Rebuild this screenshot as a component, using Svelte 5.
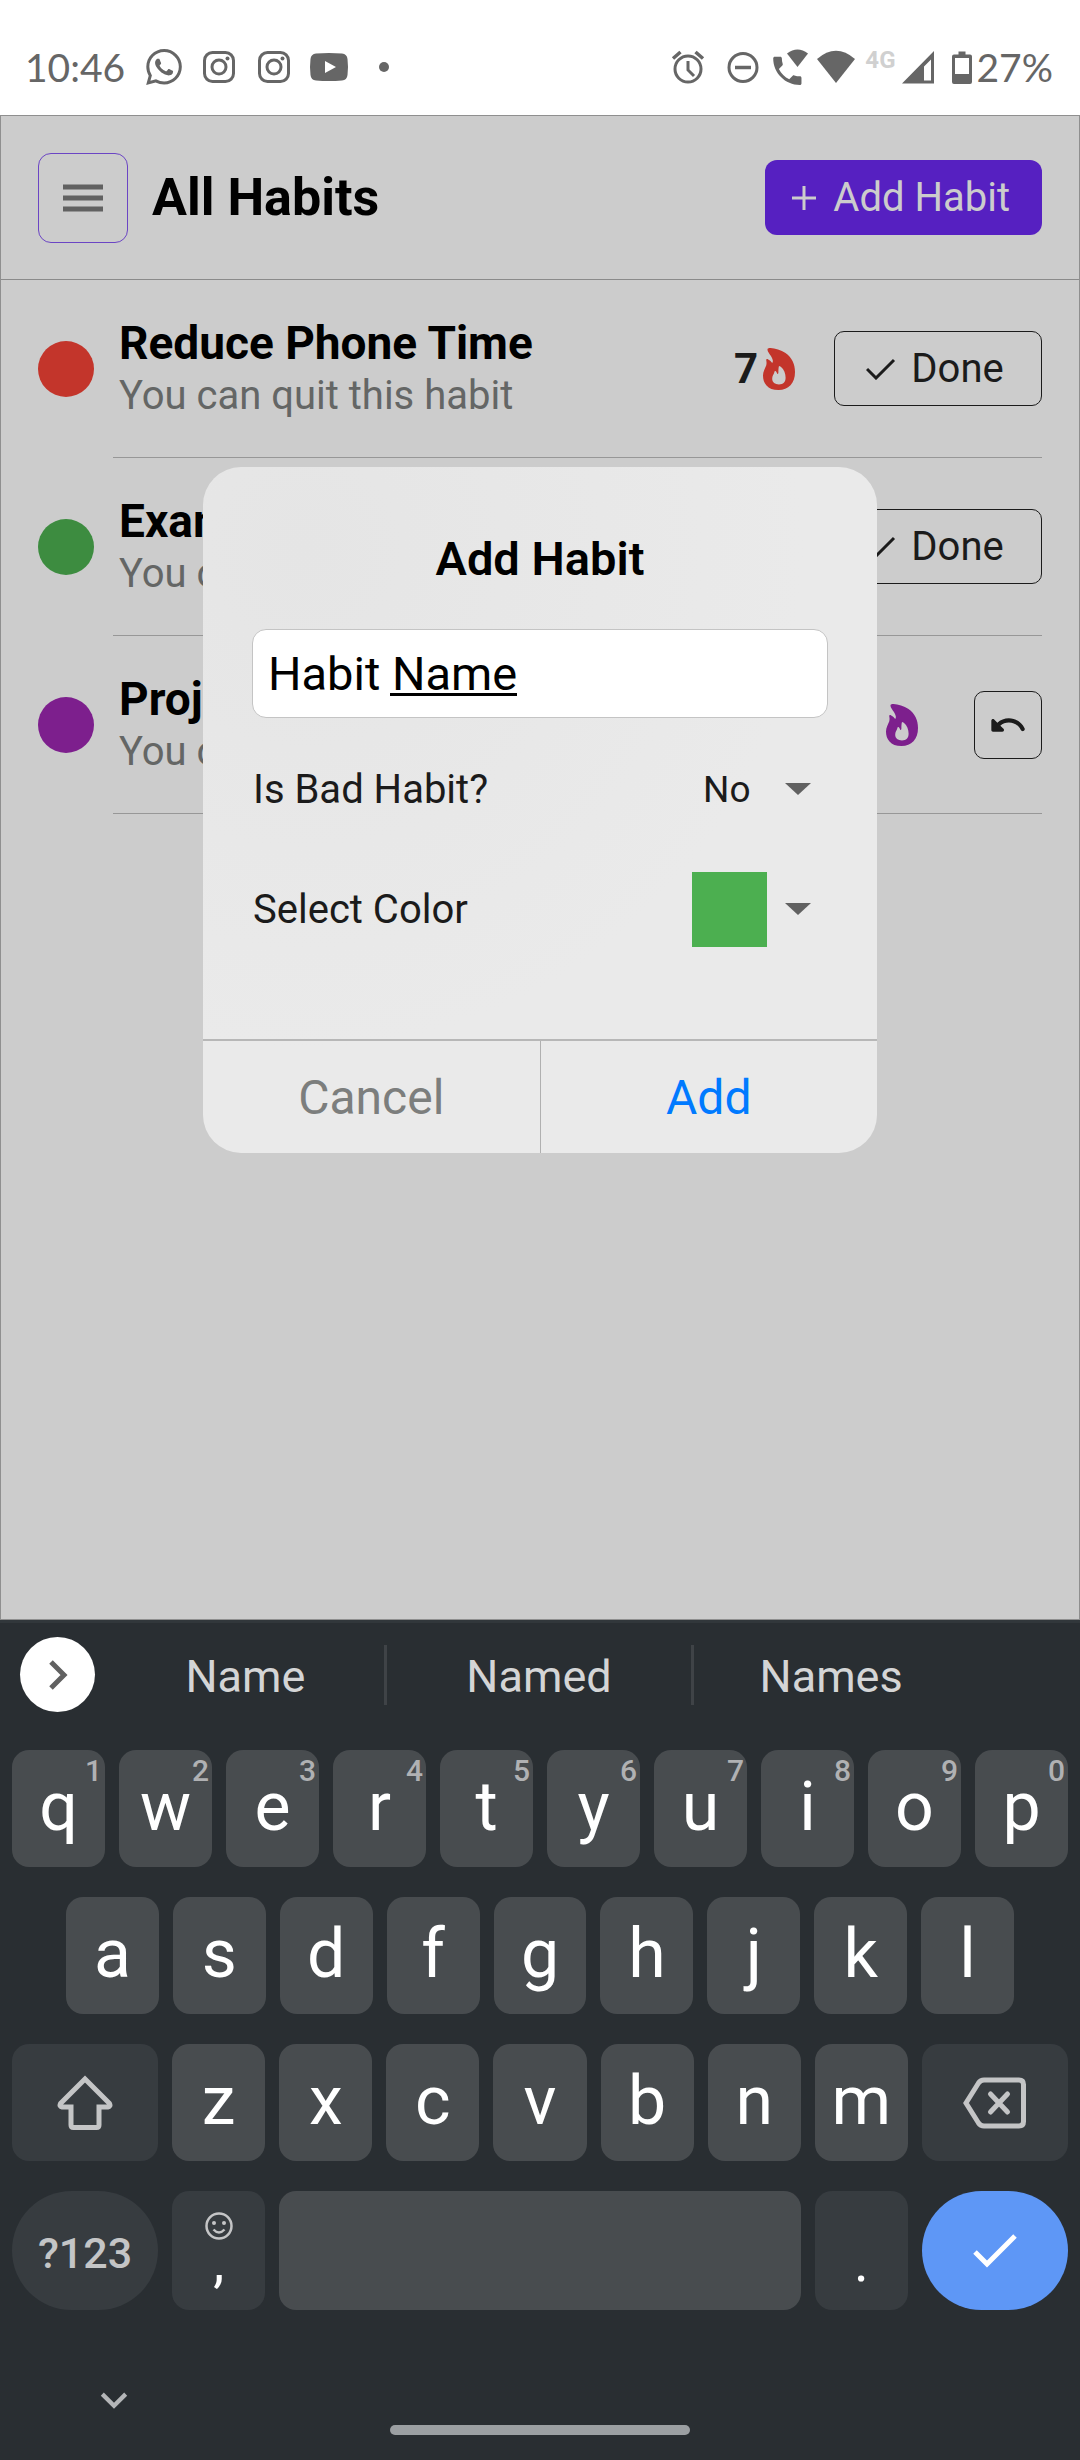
<script>
  const habits = [
    { title: 'Reduce Phone Time', note: 'You can quit this habit', color: 'red', streak: 7, done: false },
    { title: 'Exam', note: 'You can', color: 'green', streak: null, done: false },
    { title: 'Proj', note: 'You can', color: 'purple', streak: 1, done: true }
  ];

  const suggestions = ['Name', 'Named', 'Names'];
  const topRow = 'qwertyuiop'.split('').map((letter, i) => ({ letter, hint: (i + 1) % 10 }));
  const middleRow = 'asdfghjkl'.split('');
  const bottomRow = 'zxcvbnm'.split('');

  let name = $state('Habit Name');
  let bad = $state('No');
  let color = $state('green');
</script>

{#snippet instagram()}
  <svg class="glyph" viewBox="0 0 40 40" aria-hidden="true">
    <rect x="5.5" y="5.5" width="29" height="29" rx="8" fill="none" stroke="#666" stroke-width="3" />
    <circle cx="20" cy="20" r="7" fill="none" stroke="#666" stroke-width="3" />
    <circle cx="28.500" cy="11.500" r="2" fill="#666" />
  </svg>
{/snippet}

{#snippet arrow()}
  <svg class="arrow" viewBox="0 0 26 12" aria-hidden="true"><path d="M0 0h26L13 12z" fill="#616161" /></svg>
{/snippet}

<div class="device">
  <div class="screen">
    <div class="status">
      <div class="status-left">
        <span class="clock">10:46</span>
        <svg class="glyph" viewBox="-1.400 -1.400 26.800 26.800" aria-hidden="true">
          <path fill="#666" d="M17.472 14.382c-.297-.149-1.758-.867-2.03-.967-.273-.099-.471-.148-.67.15-.197.297-.767.966-.94 1.164-.173.199-.347.223-.644.075-.297-.15-1.255-.463-2.39-1.475-.883-.788-1.48-1.761-1.653-2.059-.173-.297-.018-.458.13-.606.134-.133.298-.347.446-.52.149-.174.198-.298.298-.497.099-.198.05-.371-.025-.52-.075-.149-.669-1.612-.916-2.207-.242-.579-.487-.5-.669-.51-.173-.008-.371-.01-.57-.01-.198 0-.52.074-.792.372-.272.297-1.04 1.016-1.04 2.479 0 1.462 1.065 2.875 1.213 3.074.149.198 2.096 3.2 5.077 4.487.709.306 1.262.489 1.694.625.712.227 1.36.195 1.871.118.571-.085 1.758-.719 2.006-1.413.248-.694.248-1.289.173-1.413-.074-.124-.272-.198-.57-.347m-5.421 7.403h-.004a9.87 9.87 0 01-5.031-1.378l-.361-.214-3.741.982.998-3.648-.235-.374a9.86 9.86 0 01-1.51-5.26c.001-5.45 4.436-9.884 9.888-9.884 2.64 0 5.122 1.03 6.988 2.898a9.825 9.825 0 012.893 6.994c-.003 5.45-4.437 9.884-9.885 9.884m8.413-18.297A11.815 11.815 0 0012.05 0C5.495 0 .16 5.335.157 11.892c0 2.096.547 4.142 1.588 5.945L.057 24l6.305-1.654a11.882 11.882 0 005.683 1.448h.005c6.554 0 11.89-5.335 11.893-11.893a11.821 11.821 0 00-3.48-8.413Z" />
        </svg>
        {@render instagram()}
        {@render instagram()}
        <svg class="glyph" viewBox="0 0 40 40" aria-hidden="true">
          <path fill="#666" fill-rule="evenodd" d="M7 6.500Q20 5.500 33 6.500Q38 7 38.500 12Q39.500 20 38.500 28Q38 33 33 33.500Q20 34.500 7 33.500Q2 33 1.500 28Q.500 20 1.500 12Q2 7 7 6.500zM16 14v12l11-6z" />
        </svg>
        <svg class="glyph" viewBox="0 0 40 40" aria-hidden="true"><circle cx="20" cy="20" r="5" fill="#666" /></svg>
      </div>
      <div class="status-right">
        <svg class="glyph spaced" viewBox="0 0 40 40" aria-hidden="true">
          <g fill="none" stroke="#666">
            <circle cx="20" cy="22" r="13" stroke-width="3" />
            <path d="M20 14v9l6 6" stroke-width="3" />
            <path d="M5 11.500l7.500-6.500M35 11.500l-7.500-6.500" stroke-width="3.500" />
          </g>
        </svg>
        <svg class="glyph" viewBox="0 0 40 40" aria-hidden="true">
          <circle cx="20" cy="20.500" r="14" fill="none" stroke="#666" stroke-width="3" />
          <path d="M12 20.500h16" stroke="#666" stroke-width="3.500" />
        </svg>
        <svg class="glyph call" viewBox="0 0 36 40" aria-hidden="true">
          <path fill="#666" transform="translate(-4.500 5) scale(1.570)" d="M6.620 10.790c1.440 2.830 3.760 5.140 6.590 6.590l2.200-2.200c.27-.27.67-.36 1.020-.24 1.120.37 2.330.57 3.570.57.55 0 1 .45 1 1V20c0 .55-.45 1-1 1-9.390 0-17-7.610-17-17 0-.55.45-1 1-1h3.500c.55 0 1 .45 1 1 0 1.250.2 2.450.57 3.570.11.35.03.74-.25 1.020l-2.200 2.200z" />
          <path fill="#666" d="M14 6.500Q24.500-1.500 35 6.500L24.500 20z" />
        </svg>
        <svg class="glyph wifi" viewBox="0 0 38 40" aria-hidden="true"><path fill="#666" d="M0 12Q19-4.500 38 12L19 36z" /></svg>
        <span class="network">4G</span>
        <svg class="glyph signal" viewBox="0 0 32 40" aria-hidden="true">
          <path fill="#666" fill-rule="evenodd" d="M0 36.500L32 4v32.500zM22 19.500V33.500h7V12.500z" />
        </svg>
        <svg class="glyph battery" viewBox="0 0 20 40" aria-hidden="true">
          <path fill="#666" fill-rule="evenodd" d="M6.500 4.500h7v3H18q2 0 2 2V35q0 2-2 2H2q-2 0-2-2V9.500q0-2 2-2h4.500zM3 11v16h14V11z" />
        </svg>
        <span class="percent">27%</span>
      </div>
    </div>

    <main class="app">
      <header>
        <button class="menu" aria-label="Menu">
          <svg viewBox="0 0 40 28" aria-hidden="true"><path d="M0 3h40M0 14h40M0 25h40" stroke="#616161" stroke-width="5" /></svg>
        </button>
        <h1>All Habits</h1>
        <button class="add">
          <svg viewBox="0 0 24 24" aria-hidden="true"><path d="M12 0v24M0 12h24" stroke="#ccc" stroke-width="3" /></svg>
          Add Habit
        </button>
      </header>

      <ul>
        {#each habits as habit}
          <li class={habit.color}>
            <span class="dot"></span>
            <div class="entry">
              <div class="words">
                <h2>{habit.title}</h2>
                <p>{habit.note}</p>
              </div>
              {#if habit.streak}
                <span class="streak" class:wide={habit.done}>
                  {habit.streak}
                  <svg viewBox="0 0 32 42" aria-hidden="true">
                    <path fill="currentColor" fill-rule="evenodd" d="M4.500 1C5 0 6 0 7.500 0 12 .3 18 2 22.500 5 29 9.500 32 16 32 24c0 5.500-1.500 10-4.500 13.300C24.500 40.500 20.500 42 15.500 42 10 42 6 40.500 3.500 37.500 1 34.500 0 31.500 0 27.500c0-4 2-7 3.200-10 .6-2 .3-4 0-5.500 0-1.200 1-1.200 2-.5 1.800 1 3 2 4 3.500.7-1 .8-2 .5-3C9 8 4 4 4.500 1zM16 18c-.6 2-.6 4.500-.6 6.500-.3 1.700-.8 2-1.200 1-.5-1-1-2.500-2-2.500-.7 0-.8.800-1 1.800-.5 1.700-2 3.200-2 6 0 3.600 2.800 5.600 6.800 5.600 4.200 0 6.600-2.200 6.600-6.600 0-4-1.400-8.500-4.800-11-.8-.6-1.400-.8-1.800-.8z" />
                  </svg>
                </span>
              {/if}
              {#if habit.done}
                <button class="undo" aria-label="Undo">
                  <svg viewBox="0 0 24 24" aria-hidden="true">
                    <path fill="#1b1b1b" d="M12.500 8c-2.650 0-5.050.99-6.900 2.600L3.710 8.710C3.080 8.080 2 8.520 2 9.410V15c0 .55.45 1 1 1h5.590c.89 0 1.340-1.080.71-1.710l-1.910-1.910c1.390-1.160 3.160-1.880 5.120-1.880 3.160 0 5.890 1.840 7.190 4.500.27.56.91.84 1.500.64.71-.23 1.070-1.040.75-1.720C20.230 10.420 16.650 8 12.500 8z" />
                  </svg>
                </button>
              {:else}
                <button class="done">
                  <svg viewBox="0 0 30 22" aria-hidden="true"><path d="M1 11l9 9L28 2" fill="none" stroke="#1b1b1b" stroke-width="3" /></svg>
                  Done
                </button>
              {/if}
            </div>
          </li>
        {/each}
      </ul>
    </main>

    <div class="overlay">
      <form class="dialog" onsubmit={(e) => e.preventDefault()}>
        <div class="body">
          <h3>Add Habit</h3>
          <div class="field">
            <input type="text" aria-label="Habit name" bind:value={name} />
            <span class="composing"></span>
          </div>
          <div class="option">
            <label for="bad">Is Bad Habit?</label>
            <div class="pick">
              <select id="bad" class="answer" bind:value={bad}>
                <option>No</option>
                <option>Yes</option>
              </select>
              {@render arrow()}
            </div>
          </div>
          <div class="option">
            <label for="color">Select Color</label>
            <div class="pick">
              <select id="color" class="swatch" bind:value={color}>
                <option value="green" aria-label="Green"></option>
                <option value="red" aria-label="Red"></option>
              </select>
              {@render arrow()}
            </div>
          </div>
        </div>
        <div class="actions">
          <button type="button" class="cancel">Cancel</button>
          <button type="submit" class="confirm">Add</button>
        </div>
      </form>
    </div>
  </div>

  <div class="keyboard">
    <div class="suggestions">
      <button class="expand" aria-label="More">
        <svg viewBox="0 0 20 30" aria-hidden="true"><path d="M2 2l13 13L2 28" fill="none" stroke="#616161" stroke-width="5" /></svg>
      </button>
      <div class="words-bar">
        {#each suggestions as word}
          <button class="suggestion">{word}</button>
        {/each}
      </div>
    </div>
    <div class="keys">
      <div class="row">
        {#each topRow as key}
          <button class="key">{key.letter}<span class="hint">{key.hint}</span></button>
        {/each}
      </div>
      <div class="row inset">
        {#each middleRow as letter}
          <button class="key">{letter}</button>
        {/each}
      </div>
      <div class="row">
        <button class="key side dark" aria-label="Shift">
          <svg class="shift" viewBox="0 0 56 56" aria-hidden="true">
            <path d="M28 4L52.500 28.500Q54 31.500 51 32H42V50Q42 52.500 39.500 52.500H16.500Q14 52.500 14 50V32H5Q2 31.500 3.500 28.500z" fill="none" stroke="#c4c5c6" stroke-width="5" />
          </svg>
        </button>
        {#each bottomRow as letter}
          <button class="key">{letter}</button>
        {/each}
        <button class="key side dark" aria-label="Backspace">
          <svg class="erase" viewBox="0 0 64 52" aria-hidden="true">
            <g fill="none" stroke="#c4c5c6" stroke-width="5">
              <path d="M3 26L15.500 6Q17.500 3 21 3H56Q60.500 3 60.500 7.500V44.500Q60.500 49 56 49H21Q17.500 49 15.500 46z" />
              <path d="M27.500 17l17 18M44.500 17l-17 18" stroke-linecap="round" />
            </g>
          </svg>
        </button>
      </div>
      <div class="row last">
        <button class="key side dark pill">?123</button>
        <button class="key dark stacked" aria-label="Comma">
          <svg class="smile" viewBox="0 0 28 28" aria-hidden="true">
            <circle cx="14" cy="14" r="12.500" fill="none" stroke="#c4c5c6" stroke-width="2.500" />
            <circle cx="9" cy="11" r="2" fill="#c4c5c6" />
            <circle cx="19" cy="11" r="2" fill="#c4c5c6" />
            <path d="M8.500 17.500Q14 23.500 19.500 17.500" fill="none" stroke="#c4c5c6" stroke-width="2.500" />
          </svg>
          <span>,</span>
        </button>
        <button class="key space" aria-label="Space"></button>
        <button class="key dark stacked"><span>.</span></button>
        <button class="key side pill enter" aria-label="Enter">
          <svg class="tick" viewBox="0 0 44 34" aria-hidden="true"><path d="M2 18l12 12L42 2" fill="none" stroke="#fff" stroke-width="5" /></svg>
        </button>
      </div>
    </div>
    <div class="navigation">
      <button class="hide" aria-label="Hide keyboard">
        <svg viewBox="0 0 26 16" aria-hidden="true"><path d="M2 2l11 11L24 2" fill="none" stroke="#b4b6b8" stroke-width="4" /></svg>
      </button>
      <span class="home"></span>
    </div>
  </div>
</div>

<style>
  :global(body) {
    margin: 0;
  }

  .device {
    min-height: 100vh;
    display: flex;
    flex-direction: column;
    font-family: Roboto, sans-serif;
    color: #1b1b1b;
  }

  .device :global(*) {
    box-sizing: border-box;
  }

  button,
  input,
  select {
    font: inherit;
    color: inherit;
    margin: 0;
    padding: 0;
    border: 0;
    background: none;
    white-space: nowrap;
  }

  h1,
  h2,
  h3,
  p,
  ul {
    margin: 0;
    padding: 0;
  }

  svg {
    display: block;
    flex: none;
  }

  .screen {
    position: relative;
    flex: 1;
    display: flex;
    flex-direction: column;
  }

  /* Status bar */
  .status {
    height: 115px;
    padding: 18px 27px 0 25px;
    display: flex;
    align-items: center;
    justify-content: space-between;
    background: #fff;
    color: #666;
    font-family: Lato, sans-serif;
    font-size: 39px;
    line-height: 40px;
  }

  .status-left,
  .status-right {
    display: flex;
    align-items: center;
  }

  .status-left {
    gap: 15px;
  }

  .clock {
    min-width: 104px;
  }

  .glyph {
    width: 40px;
    height: 40px;
  }

  .glyph.spaced {
    margin-right: 15px;
  }

  .glyph.call {
    width: 36px;
    margin: 0 8px 0 10px;
  }

  .glyph.wifi {
    width: 38px;
  }

  .network {
    margin: 0 6px 14px 10px;
    font-family: Roboto, sans-serif;
    font-size: 24px;
    line-height: 26px;
    font-weight: 700;
    color: #d0d0d0;
  }

  .glyph.signal {
    width: 32px;
  }

  .glyph.battery {
    width: 20px;
    margin: 0 5px 0 18px;
  }

  /* Habit list */
  .app {
    flex: 1;
    border: 1px solid #8f8f8f;
    background: #ccc;
  }

  header {
    height: 164px;
    padding: 0 37px;
    display: flex;
    align-items: center;
    border-bottom: 1px solid #8a8a8a;
  }

  .menu {
    width: 90px;
    height: 90px;
    display: grid;
    place-items: center;
    border: 1px solid #6b45c4;
    border-radius: 13px;
  }

  .menu svg {
    width: 40px;
    height: 28px;
  }

  h1 {
    flex: 1;
    margin-left: 24px;
    font-size: 52px;
    line-height: 60px;
    font-weight: 700;
    color: #000;
  }

  .add {
    height: 75px;
    padding: 0 32px 0 27px;
    display: flex;
    align-items: center;
    gap: 17px;
    border-radius: 12px;
    background: #5620c1;
    color: #ccc;
    font-size: 40px;
  }

  .add svg {
    width: 24px;
    height: 24px;
  }

  ul {
    list-style: none;
  }

  li {
    height: 178px;
    padding: 0 37px;
    display: flex;
    align-items: center;
    gap: 19px;
  }

  .red {
    color: #c3352b;
  }

  .green {
    color: #3d8c40;
  }

  .purple {
    color: #7d1f8d;
  }

  .dot {
    width: 56px;
    height: 56px;
    flex: none;
    border-radius: 50%;
    background: currentColor;
  }

  .entry {
    flex: 1;
    align-self: stretch;
    padding-left: 6px;
    display: flex;
    align-items: center;
    border-bottom: 1px solid #979797;
  }

  .words {
    margin-right: auto;
  }

  h2 {
    margin-bottom: 3px;
    font-size: 46px;
    line-height: 51px;
    font-weight: 700;
    color: #000;
  }

  p {
    font-size: 40px;
    line-height: 47px;
    color: #646665;
  }

  .streak {
    margin-right: 39px;
    display: flex;
    align-items: center;
    gap: 5px;
    font-size: 42px;
    font-weight: 700;
  }

  .streak.wide {
    margin-right: 56px;
  }

  .red .streak {
    color: #1b1b1b;
  }

  .red .streak svg {
    color: #c3352b;
  }

  .streak svg {
    width: 32px;
    height: 42px;
  }

  .done,
  .undo {
    border: 1px solid #1b1b1b;
    border-radius: 10px;
    color: #1b1b1b;
    font-size: 40px;
  }

  .done {
    width: 208px;
    height: 75px;
    padding-right: 6px;
    display: flex;
    align-items: center;
    justify-content: center;
    gap: 15px;
  }

  .done svg {
    width: 30px;
    height: 22px;
  }

  .undo {
    width: 68px;
    height: 68px;
    display: grid;
    place-items: center;
  }

  .undo svg {
    width: 40px;
    height: 40px;
  }

  /* Dialog */
  .overlay {
    position: absolute;
    inset: 0;
    display: flex;
    align-items: center;
    justify-content: center;
  }

  .dialog {
    width: 674px;
    overflow: hidden;
    border-radius: 38px;
    background: radial-gradient(circle at 15% 12%, #e5e5e5, #eaeaea 60%);
  }

  .body {
    padding: 64px 49px 70px;
    border-bottom: 2px solid #b7b7b7;
  }

  h3 {
    font-size: 47px;
    line-height: 56px;
    font-weight: 600;
    text-align: center;
    color: #000;
  }

  .field {
    position: relative;
    margin: 42px 0 11px;
  }

  .field input {
    display: block;
    width: 100%;
    height: 89px;
    padding: 0 15px;
    border: 1px solid #c4c4c4;
    border-radius: 14px;
    background: #fff;
    font-size: 47px;
    color: #000;
  }

  .composing {
    position: absolute;
    left: 138px;
    bottom: 22px;
    width: 127px;
    height: 3px;
    background: #000;
  }

  .option {
    height: 120px;
    padding: 0 17px 0 1px;
    display: flex;
    align-items: center;
    justify-content: space-between;
    font-size: 40px;
  }

  .pick {
    display: flex;
    align-items: center;
    gap: 18px;
  }

  select {
    appearance: none;
    width: 75px;
  }

  .answer {
    width: 64px;
    font-size: 37px;
  }

  .swatch {
    height: 75px;
    background: #4caf50;
  }

  .arrow {
    width: 26px;
    height: 12px;
  }

  .actions {
    display: flex;
  }

  .actions button {
    flex: 1;
    height: 112px;
    font-size: 48px;
  }

  .cancel {
    border-right: 1px solid #b0b0b0;
    color: #7c7e7d;
  }

  .confirm {
    color: #007aff;
  }

  /* Keyboard */
  .keyboard {
    border-top: 3px solid #31373b;
    background: #292e32;
  }

  .suggestions {
    height: 103px;
    padding: 0 112px 0 20px;
    display: flex;
    align-items: center;
  }

  .expand {
    width: 75px;
    height: 75px;
    padding-left: 2px;
    flex: none;
    display: grid;
    place-items: center;
    border-radius: 50%;
    background: #fff;
  }

  .expand svg {
    width: 20px;
    height: 30px;
  }

  .words-bar {
    flex: 1;
    margin-left: 12px;
    display: grid;
    grid-template-columns: 9fr 10fr 9fr;
  }

  .suggestion {
    height: 60px;
    padding-top: 4px;
    color: #d4d5d6;
    font-size: 45px;
  }

  .suggestion + .suggestion {
    border-left: 3px solid #3f4347;
  }

  .keys {
    padding: 24px 12px 0;
    display: grid;
    gap: 30px;
  }

  .row {
    height: 117px;
    display: flex;
    gap: 14px;
  }

  .row.inset {
    padding: 0 54px;
  }

  .row.last {
    height: 119px;
  }

  .key {
    position: relative;
    flex: 93 1 0;
    min-width: 0;
    padding-bottom: 4px;
    display: flex;
    align-items: center;
    justify-content: center;
    border-radius: 17px;
    background: #484c4f;
    color: #fff;
    font-size: 68px;
    line-height: 80px;
  }

  .key.side {
    flex-grow: 146;
    padding-bottom: 0;
  }

  .key.dark {
    background: #373c40;
  }

  .key.space {
    flex-grow: 521;
  }

  .key.pill {
    padding-top: 4px;
    border-radius: 60px;
    color: #c4c5c6;
    font-size: 43px;
    font-weight: 500;
  }

  .key.enter {
    padding: 0;
    background: #5e97f6;
  }

  .key.stacked {
    padding-bottom: 31px;
    flex-direction: column;
    justify-content: flex-end;
    font-size: 56px;
    line-height: 34px;
  }

  .hint {
    position: absolute;
    top: 6px;
    right: 3px;
    font-size: 30px;
    font-weight: 500;
    line-height: 30px;
    color: #b0b1b3;
  }

  .shift {
    width: 56px;
    height: 56px;
  }

  .erase {
    width: 64px;
    height: 52px;
  }

  .smile {
    width: 28px;
    height: 28px;
    margin-bottom: 5px;
  }

  .tick {
    width: 44px;
    height: 34px;
  }

  .navigation {
    height: 150px;
    padding: 80px 100px 0;
    display: grid;
    grid-template-columns: 1fr 300px 1fr;
  }

  .hide {
    width: 28px;
    height: 20px;
  }

  .hide svg {
    width: 28px;
    height: 17px;
  }

  .home {
    height: 10px;
    margin-top: 35px;
    border-radius: 5px;
    background: #9b9fa2;
  }
</style>
